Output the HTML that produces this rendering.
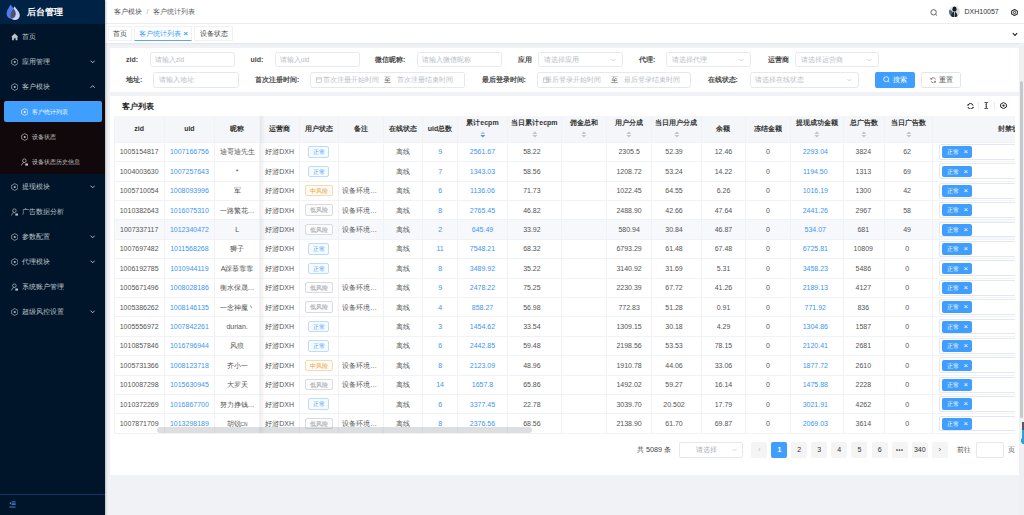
<!DOCTYPE html>
<html><head><meta charset="utf-8"><style>*{margin:0;padding:0;box-sizing:border-box;}
html,body{width:1024px;height:515px;overflow:hidden;background:#f0f2f5;font-family:"Liberation Sans",sans-serif;font-size:7px;color:#606266;}
.abs{position:absolute;}
#side{position:absolute;left:0;top:0;width:105px;height:515px;background:#001529;box-shadow:1px 0 2px rgba(0,21,41,0.25);z-index:5;}
#logo{position:absolute;left:0;top:0;width:105px;height:23.5px;background:#002244;}
#logo .t{position:absolute;left:27px;top:5px;font-size:9.3px;font-weight:bold;color:#fff;line-height:14px;}
.mi{position:absolute;left:0;width:105px;height:25px;color:#bcc2ca;font-size:7px;line-height:23.8px;font-weight:500;}
.mi .ic{position:absolute;left:10.8px;top:8.3px;width:7.5px;height:8px;}
.mi .tx{position:absolute;left:22px;top:0;}
.mi .ch{position:absolute;left:89.8px;top:9.5px;width:5.4px;height:5.4px;color:#d0d4da;}
#sub{position:absolute;left:0;top:99.5px;width:105px;height:74.5px;background:#10080a;}
.si{position:absolute;left:0;width:105px;height:25px;color:#c5c5c5;font-size:6px;line-height:24px;}
.si .ic{position:absolute;left:20.8px;top:8.3px;width:7.5px;height:8px;}
.si .tx{position:absolute;left:32px;top:0;}
#header{position:absolute;left:105px;top:0;width:919px;height:23.5px;background:#fff;border-bottom:1px solid #eceef1;}
#tabs{position:absolute;left:105px;top:23.5px;width:919px;height:19px;background:#fff;box-shadow:0 1px 2px rgba(0,0,0,0.06);}
.tab{position:absolute;top:2.7px;height:14.8px;border:1px solid #f0f1f4;background:#fff;color:#444;font-size:7px;line-height:13px;text-align:center;font-weight:500;}
.card{position:absolute;background:#fff;}
.lbl{position:absolute;font-weight:bold;color:#4a4a4a;font-size:7px;line-height:16px;}
.inp{position:absolute;height:15.7px;border:1px solid #e6e8ec;border-radius:2.5px;background:#fff;color:#b8bcc4;font-size:6.5px;line-height:13.5px;padding-left:4.3px;}
.inp span{top:0;}
.hd{position:absolute;text-align:center;font-weight:bold;color:#333;font-size:7px;line-height:10px;white-space:nowrap;}
.td{position:absolute;text-align:center;color:#555;font-size:7px;line-height:12px;white-space:nowrap;overflow:hidden;}
.tg{position:absolute;height:11.5px;border:0.7px solid;border-radius:2px;font-size:5.8px;line-height:10.1px;text-align:center;white-space:nowrap;}
.tg-b{border-color:#bcdcfd;background:#f7fbff;color:#409eff;}
.tg-o{border-color:#f5dbb5;background:#fffbf5;color:#e6a23c;}
.tg-g{border-color:#d9dbe0;background:#fcfcfc;color:#8e9196;}
.pb{position:absolute;top:442.2px;width:16px;height:15.7px;background:#f4f4f5;border-radius:2px;color:#303133;text-align:center;line-height:15.7px;font-size:7px;}
</style></head>
<body>
<div id="side"><div id="logo">
<svg class="abs" style="left:6px;top:4px" width="15" height="17" viewBox="0 0 15 17"><defs><clipPath id="cl"><path d="M4.6 0.5 C3.4 3 0.6 6.2 0.6 9.6 C0.6 12.6 2.6 14.8 5.2 14.8 C7.8 14.8 9.8 12.6 9.8 9.6 C9.8 6.2 6 3 4.6 0.5Z"/></clipPath></defs><path d="M4.6 0.5 C3.4 3 0.6 6.2 0.6 9.6 C0.6 12.6 2.6 14.8 5.2 14.8 C7.8 14.8 9.8 12.6 9.8 9.6 C9.8 6.2 6 3 4.6 0.5Z" fill="#4a7cf3"/><path d="M8.6 2.2 C7.4 4.8 4.2 7.8 4.2 11.2 C4.2 14 6.2 16 8.9 16 C11.6 16 13.8 14 13.8 11.2 C13.8 7.8 10 4.8 8.6 2.2Z" fill="#c8cff5"/><path d="M8.6 2.2 C7.4 4.8 4.2 7.8 4.2 11.2 C4.2 14 6.2 16 8.9 16 C11.6 16 13.8 14 13.8 11.2 C13.8 7.8 10 4.8 8.6 2.2Z" fill="#4c5072" clip-path="url(#cl)"/></svg><div class="t">后台管理</div></div><div class="mi" style="top:24.5px"><svg class="ic" viewBox="0 0 8 8"><path d="M4 0.3 L7.8 3.8 L6.9 3.8 L6.9 7.5 L4.9 7.5 L4.9 5.3 L3.1 5.3 L3.1 7.5 L1.1 7.5 L1.1 3.8 L0.2 3.8 Z" fill="currentColor"/></svg><span class="tx">首页</span></div><div class="mi" style="top:49.5px"><svg class="ic" viewBox="0 0 8 8"><path d="M4 0.4 L7.3 2.2 L7.3 5.8 L4 7.6 L0.7 5.8 L0.7 2.2 Z" fill="none" stroke="currentColor" stroke-width="0.7"/><circle cx="4" cy="4" r="1.1" fill="currentColor"/></svg><span class="tx">应用管理</span><svg class="ch" viewBox="0 0 6 6"><path d="M0.6 1.8 L3 4.2 L5.4 1.8" fill="none" stroke="currentColor" stroke-width="0.95"/></svg></div><div class="mi" style="top:74.5px"><svg class="ic" viewBox="0 0 8 8"><path d="M4 0.4 L7.3 2.2 L7.3 5.8 L4 7.6 L0.7 5.8 L0.7 2.2 Z" fill="none" stroke="currentColor" stroke-width="0.7"/><circle cx="4" cy="4" r="1.1" fill="currentColor"/></svg><span class="tx">客户模块</span><svg class="ch" viewBox="0 0 6 6"><path d="M0.6 4.2 L3 1.8 L5.4 4.2" fill="none" stroke="currentColor" stroke-width="0.95"/></svg></div><div class="mi" style="top:174.5px"><svg class="ic" viewBox="0 0 8 8"><path d="M4 0.4 L7.3 2.2 L7.3 5.8 L4 7.6 L0.7 5.8 L0.7 2.2 Z" fill="none" stroke="currentColor" stroke-width="0.7"/><circle cx="4" cy="4" r="1.1" fill="currentColor"/></svg><span class="tx">提现模块</span><svg class="ch" viewBox="0 0 6 6"><path d="M0.6 1.8 L3 4.2 L5.4 1.8" fill="none" stroke="currentColor" stroke-width="0.95"/></svg></div><div class="mi" style="top:199.5px"><svg class="ic" viewBox="0 0 8 8"><circle cx="3.6" cy="2.6" r="1.9" fill="none" stroke="currentColor" stroke-width="0.75"/><path d="M0.6 7.6 C1 5.6 2.2 4.6 3.6 4.6" fill="none" stroke="currentColor" stroke-width="0.75"/><rect x="4.6" y="5.6" width="3" height="2.2" fill="currentColor"/></svg><span class="tx">广告数据分析</span></div><div class="mi" style="top:224.5px"><svg class="ic" viewBox="0 0 8 8"><path d="M4 0.4 L7.3 2.2 L7.3 5.8 L4 7.6 L0.7 5.8 L0.7 2.2 Z" fill="none" stroke="currentColor" stroke-width="0.7"/><circle cx="4" cy="4" r="1.1" fill="currentColor"/></svg><span class="tx">参数配置</span><svg class="ch" viewBox="0 0 6 6"><path d="M0.6 1.8 L3 4.2 L5.4 1.8" fill="none" stroke="currentColor" stroke-width="0.95"/></svg></div><div class="mi" style="top:249.5px"><svg class="ic" viewBox="0 0 8 8"><path d="M4 0.4 L7.3 2.2 L7.3 5.8 L4 7.6 L0.7 5.8 L0.7 2.2 Z" fill="none" stroke="currentColor" stroke-width="0.7"/><circle cx="4" cy="4" r="1.1" fill="currentColor"/></svg><span class="tx">代理模块</span><svg class="ch" viewBox="0 0 6 6"><path d="M0.6 1.8 L3 4.2 L5.4 1.8" fill="none" stroke="currentColor" stroke-width="0.95"/></svg></div><div class="mi" style="top:274.5px"><svg class="ic" viewBox="0 0 8 8"><circle cx="3.6" cy="2.6" r="1.9" fill="none" stroke="currentColor" stroke-width="0.75"/><path d="M0.6 7.6 C1 5.6 2.2 4.6 3.6 4.6" fill="none" stroke="currentColor" stroke-width="0.75"/><rect x="4.6" y="5.6" width="3" height="2.2" fill="currentColor"/></svg><span class="tx">系统账户管理</span></div><div class="mi" style="top:299.5px"><svg class="ic" viewBox="0 0 8 8"><path d="M4 0.4 L7.3 2.2 L7.3 5.8 L4 7.6 L0.7 5.8 L0.7 2.2 Z" fill="none" stroke="currentColor" stroke-width="0.7"/><circle cx="4" cy="4" r="1.1" fill="currentColor"/></svg><span class="tx">超级风控设置</span><svg class="ch" viewBox="0 0 6 6"><path d="M0.6 1.8 L3 4.2 L5.4 1.8" fill="none" stroke="currentColor" stroke-width="0.95"/></svg></div><div id="sub"></div><div class="abs" style="left:4px;top:101.2px;width:97.5px;height:20.5px;background:#409eff;border-radius:2px"></div><div class="si" style="top:99.5px;color:#fff"><svg class="ic" viewBox="0 0 8 8"><path d="M4 0.4 L7.3 2.2 L7.3 5.8 L4 7.6 L0.7 5.8 L0.7 2.2 Z" fill="none" stroke="currentColor" stroke-width="0.7"/><circle cx="4" cy="4" r="1.1" fill="currentColor"/></svg><span class="tx">客户统计列表</span></div><div class="si" style="top:124.5px;color:#c8c8c8"><svg class="ic" viewBox="0 0 8 8"><path d="M4 0.4 L7.3 2.2 L7.3 5.8 L4 7.6 L0.7 5.8 L0.7 2.2 Z" fill="none" stroke="currentColor" stroke-width="0.7"/><circle cx="4" cy="4" r="1.1" fill="currentColor"/></svg><span class="tx">设备状态</span></div><div class="si" style="top:149.5px;color:#c8c8c8"><svg class="ic" viewBox="0 0 8 8"><circle cx="3.6" cy="2.6" r="1.9" fill="none" stroke="currentColor" stroke-width="0.75"/><path d="M0.6 7.6 C1 5.6 2.2 4.6 3.6 4.6" fill="none" stroke="currentColor" stroke-width="0.75"/><rect x="4.6" y="5.6" width="3" height="2.2" fill="currentColor"/></svg><span class="tx">设备状态历史信息</span></div><div class="abs" style="left:0;top:494px;width:105px;height:1px;background:#0b3866"></div><svg class="abs" style="left:8.5px;top:500.5px" width="7" height="7" viewBox="0 0 7 7"><path d="M0.3 2.2 L2 1 L2 3.4Z" fill="#3f8ee8"/><rect x="2.6" y="0.4" width="4" height="0.8" fill="#3f8ee8"/><rect x="2.6" y="1.8" width="4" height="0.8" fill="#3f8ee8"/><rect x="2.6" y="3.2" width="4" height="0.8" fill="#3f8ee8"/><rect x="0.3" y="5.6" width="6.3" height="0.9" fill="#3f8ee8"/></svg></div>
<div id="header">
<div class="abs" style="left:8.6px;top:0.4px;line-height:23.5px;color:#505359;font-size:6.9px;font-weight:500">客户模块<span style="color:#a9acb2;margin:0 4.6px 0 5px">/</span><span style="color:#606266">客户统计列表</span></div>
<svg class="abs" style="left:824.5px;top:8.5px" width="8" height="7" viewBox="0 0 8 7"><circle cx="3.6" cy="3.3" r="2.7" fill="none" stroke="#555" stroke-width="0.9"/><path d="M5.6 5.3 L7 6.6" stroke="#555" stroke-width="0.9"/></svg>
<svg class="abs" style="left:843.9px;top:6.1px" width="10.8" height="11.2" viewBox="0 0 10.8 11.2"><defs><clipPath id="av"><ellipse cx="5.4" cy="5.6" rx="5.4" ry="5.6"/></clipPath></defs><g clip-path="url(#av)"><rect width="11" height="12" fill="#dadde0"/><path d="M0 3.5 L0 12 L7 12 L3 5Z" fill="#3a6c8e"/><path d="M2 12 C2 8 3 6.2 5.3 5.8 C7.6 6.2 8.4 8 8.8 12Z" fill="#20272d"/><ellipse cx="5.5" cy="3.2" rx="2.1" ry="2.6" fill="#1a1a1a"/><path d="M5.1 5.6 L6.1 5.6 L5.8 11 L5.2 11Z" fill="#c8c8c8"/></g></svg>
<div class="abs" style="left:859.5px;top:0;line-height:23.5px;color:#333;font-size:7px">DXH10057</div>
<svg class="abs" style="left:905.5px;top:8.6px" width="7" height="7" viewBox="0 0 8 8"><path d="M4 0.5 L7.3 2.3 L7.3 5.7 L4 7.5 L0.7 5.7 L0.7 2.3 Z" fill="none" stroke="#333" stroke-width="1.2"/><circle cx="4" cy="4" r="1.3" fill="none" stroke="#333" stroke-width="1.1"/></svg>
</div>
<div id="tabs">
<div class="tab" style="left:2.7px;width:24.7px">首页</div>
<div class="tab" style="left:29px;width:58px;color:#409eff;border-bottom:1.6px solid #5aa6f5;line-height:12.5px"><span style="position:absolute;left:4.2px;top:0.5px">客户统计列表</span><span style="position:absolute;left:48.3px;top:1.8px;font-size:8px;line-height:10px;font-weight:bold">×</span></div>
<div class="tab" style="left:89px;width:39px">设备状态</div>
<svg class="abs" style="left:907px;top:8px" width="6" height="5" viewBox="0 0 6 5"><path d="M0.8 1.2 L3 3.4 L5.2 1.2" fill="none" stroke="#222" stroke-width="1.1"/></svg>
</div>
<div class="card" style="left:110px;top:47.5px;width:909px;height:44.5px"></div><div class="lbl" style="left:126px;top:51.5px">zid:</div><div class="inp" style="left:149.5px;top:51.7px;width:85px">请输入zid</div><div class="lbl" style="left:250.5px;top:51.5px">uid:</div><div class="inp" style="left:274.5px;top:51.7px;width:85px">请输入uid</div><div class="lbl" style="left:375px;top:51.5px">微信昵称:</div><div class="inp" style="left:416.5px;top:51.7px;width:85px">请输入微信昵称</div><div class="lbl" style="left:518px;top:51.5px">应用</div><div class="inp" style="left:538.4px;top:51.7px;width:84.2px">请选择应用<svg class="abs" style="right:6px;top:5px" width="5" height="4" viewBox="0 0 5 4"><path d="M0.5 1 L2.5 3 L4.5 1" fill="none" stroke="#b4b8bf" stroke-width="0.6"/></svg></div><div class="lbl" style="left:639px;top:51.5px">代理:</div><div class="inp" style="left:666.4px;top:51.7px;width:84.8px">请选择代理<svg class="abs" style="right:6px;top:5px" width="5" height="4" viewBox="0 0 5 4"><path d="M0.5 1 L2.5 3 L4.5 1" fill="none" stroke="#b4b8bf" stroke-width="0.6"/></svg></div><div class="lbl" style="left:767.5px;top:51.5px">运营商</div><div class="inp" style="left:795.4px;top:51.7px;width:84.1px">请选择运营商<svg class="abs" style="right:6px;top:5px" width="5" height="4" viewBox="0 0 5 4"><path d="M0.5 1 L2.5 3 L4.5 1" fill="none" stroke="#b4b8bf" stroke-width="0.6"/></svg></div><div class="lbl" style="left:126px;top:71.8px">地址:</div><div class="inp" style="left:153.4px;top:72.2px;width:85.2px">请输入地址:</div><div class="lbl" style="left:255px;top:71.8px">首次注册时间:</div><div class="inp" style="left:310.3px;top:72.2px;width:155px;padding-left:0"><svg class="abs" style="left:4.5px;top:3.6px" width="6" height="6" viewBox="0 0 6 6"><rect x="0.4" y="0.8" width="5.2" height="4.8" fill="none" stroke="#b4b8bf" stroke-width="0.6"/><path d="M0.4 2 L5.6 2" stroke="#b4b8bf" stroke-width="0.6"/></svg><span class="abs" style="left:12px">首次注册开始时间</span><span class="abs" style="left:73px;color:#555">至</span><span class="abs" style="left:86px">首次注册结束时间</span></div><div class="lbl" style="left:481.5px;top:71.8px">最后登录时间:</div><div class="inp" style="left:537.3px;top:72.2px;width:154.2px;padding-left:0"><svg class="abs" style="left:4.5px;top:3.6px" width="6" height="6" viewBox="0 0 6 6"><rect x="0.4" y="0.8" width="5.2" height="4.8" fill="none" stroke="#b4b8bf" stroke-width="0.6"/><path d="M0.4 2 L5.6 2" stroke="#b4b8bf" stroke-width="0.6"/></svg><span class="abs" style="left:7px">最后登录开始时间</span><span class="abs" style="left:72.5px;color:#555">至</span><span class="abs" style="left:85.5px">最后登录结束时间</span></div><div class="lbl" style="left:707.6px;top:71.8px">在线状态:</div><div class="inp" style="left:749.7px;top:72.2px;width:109.2px">请选择在线状态<svg class="abs" style="right:6px;top:5px" width="5" height="4" viewBox="0 0 5 4"><path d="M0.5 1 L2.5 3 L4.5 1" fill="none" stroke="#b4b8bf" stroke-width="0.6"/></svg></div><div class="abs" style="left:875.4px;top:71.7px;width:39.4px;height:16px;background:#409eff;border-radius:2px;color:#fff;line-height:16px;font-size:7px"><svg class="abs" style="left:7.6px;top:4.6px" width="7" height="7" viewBox="0 0 7 7"><circle cx="3.2" cy="3.2" r="2.5" fill="none" stroke="#fff" stroke-width="0.75"/><path d="M5 5 L6.3 6.3" stroke="#fff" stroke-width="0.75"/></svg><span class="abs" style="left:18px">搜索</span></div><div class="abs" style="left:921.4px;top:71.7px;width:39.3px;height:16px;background:#fff;border:1px solid #e2e5ea;border-radius:2px;color:#555;line-height:14px;font-size:7px"><svg class="abs" style="left:7.6px;top:4.2px" width="6.5" height="6.5" viewBox="0 0 7 7"><path d="M5.9 2.6 A2.6 2.6 0 0 0 1.0 2.3" fill="none" stroke="#555" stroke-width="0.7"/><path d="M1.1 4.4 A2.6 2.6 0 0 0 6 4.7" fill="none" stroke="#555" stroke-width="0.7"/><path d="M0.7 0.9 L1.0 2.5 L2.6 2.2" fill="none" stroke="#555" stroke-width="0.7"/><path d="M6.3 6.1 L6 4.5 L4.4 4.8" fill="none" stroke="#555" stroke-width="0.7"/></svg><span class="abs" style="left:17px">重置</span></div>
<div class="card" style="left:110px;top:95.5px;width:909px;height:379.2px"></div><div class="abs" style="left:122.4px;top:100.7px;font-size:7.9px;font-weight:bold;color:#222;line-height:12px">客户列表</div><svg class="abs" style="left:966.5px;top:102.5px" width="7" height="6.6" viewBox="0 0 7 6.6"><path d="M1.0 2.2 A2.6 2.6 0 0 1 6.0 2.6" fill="none" stroke="#222" stroke-width="1"/><path d="M6.0 4.4 A2.6 2.6 0 0 1 1.0 4.0" fill="none" stroke="#222" stroke-width="1"/><circle cx="1.0" cy="2.0" r="0.75" fill="#222"/><circle cx="6.0" cy="4.6" r="0.75" fill="#222"/></svg><div class="abs" style="left:977.8px;top:102px;width:0.7px;height:7.5px;background:#e8eaee"></div><svg class="abs" style="left:984px;top:102.3px" width="4.5" height="7" viewBox="0 0 4.5 7"><path d="M0.4 0.5 L4.1 0.5 M0.4 6.5 L4.1 6.5" stroke="#333" stroke-width="0.8"/><path d="M2.25 1.2 L2.25 5.8" stroke="#333" stroke-width="0.9"/><path d="M1.2 2.4 L2.25 1.3 L3.3 2.4Z M1.2 4.6 L2.25 5.7 L3.3 4.6Z" fill="#333"/></svg><div class="abs" style="left:994.2px;top:102px;width:0.7px;height:7.5px;background:#e8eaee"></div><svg class="abs" style="left:999.6px;top:102.2px" width="7" height="7.2" viewBox="0 0 7 7.2"><path d="M3.5 0.55 L6.35 2.15 L6.35 5.05 L3.5 6.65 L0.65 5.05 L0.65 2.15 Z" fill="none" stroke="#222" stroke-width="1"/><circle cx="3.5" cy="3.6" r="1.15" fill="#222"/></svg><div class="abs" style="left:114px;top:116.2px;width:901px;height:318px;overflow:hidden"><div class="abs" style="left:0;top:0;width:930px;height:26.10000000000001px;background:#f4f6f9"></div><div class="abs" style="left:0;top:104.2px;width:930px;height:18.9px;background:#f6f8fb"></div><div class="abs" style="left:0;top:25.60000000000001px;width:930px;height:0.7px;background:#f0f2f5"></div><div class="abs" style="left:0;top:45.000000000000014px;width:930px;height:0.7px;background:#f0f2f5"></div><div class="abs" style="left:0;top:64.40000000000002px;width:930px;height:0.7px;background:#f0f2f5"></div><div class="abs" style="left:0;top:83.8px;width:930px;height:0.7px;background:#f0f2f5"></div><div class="abs" style="left:0;top:103.2px;width:930px;height:0.7px;background:#f0f2f5"></div><div class="abs" style="left:0;top:122.60000000000001px;width:930px;height:0.7px;background:#f0f2f5"></div><div class="abs" style="left:0;top:142.0px;width:930px;height:0.7px;background:#f0f2f5"></div><div class="abs" style="left:0;top:161.40000000000003px;width:930px;height:0.7px;background:#f0f2f5"></div><div class="abs" style="left:0;top:180.8px;width:930px;height:0.7px;background:#f0f2f5"></div><div class="abs" style="left:0;top:200.2px;width:930px;height:0.7px;background:#f0f2f5"></div><div class="abs" style="left:0;top:219.60000000000002px;width:930px;height:0.7px;background:#f0f2f5"></div><div class="abs" style="left:0;top:239.0px;width:930px;height:0.7px;background:#f0f2f5"></div><div class="abs" style="left:0;top:258.40000000000003px;width:930px;height:0.7px;background:#f0f2f5"></div><div class="abs" style="left:0;top:277.8px;width:930px;height:0.7px;background:#f0f2f5"></div><div class="abs" style="left:0;top:297.2px;width:930px;height:0.7px;background:#f0f2f5"></div><div class="abs" style="left:0;top:316.6px;width:930px;height:0.7px;background:#f0f2f5"></div><div class="abs" style="left:49.900000000000006px;top:0;width:0.7px;height:317.1px;background:#f0f2f5"></div><div class="abs" style="left:99.9px;top:0;width:0.7px;height:317.1px;background:#f0f2f5"></div><div class="abs" style="left:145.3px;top:0;width:0.7px;height:317.1px;background:#f0f2f5"></div><div class="abs" style="left:185.0px;top:0;width:0.7px;height:317.1px;background:#f0f2f5"></div><div class="abs" style="left:223.8px;top:0;width:0.7px;height:317.1px;background:#f0f2f5"></div><div class="abs" style="left:269.0px;top:0;width:0.7px;height:317.1px;background:#f0f2f5"></div><div class="abs" style="left:308.0px;top:0;width:0.7px;height:317.1px;background:#f0f2f5"></div><div class="abs" style="left:343.2px;top:0;width:0.7px;height:317.1px;background:#f0f2f5"></div><div class="abs" style="left:392.8px;top:0;width:0.7px;height:317.1px;background:#f0f2f5"></div><div class="abs" style="left:447.0px;top:0;width:0.7px;height:317.1px;background:#f0f2f5"></div><div class="abs" style="left:492.29999999999995px;top:0;width:0.7px;height:317.1px;background:#f0f2f5"></div><div class="abs" style="left:536.9px;top:0;width:0.7px;height:317.1px;background:#f0f2f5"></div><div class="abs" style="left:586.9px;top:0;width:0.7px;height:317.1px;background:#f0f2f5"></div><div class="abs" style="left:631.1px;top:0;width:0.7px;height:317.1px;background:#f0f2f5"></div><div class="abs" style="left:675.9px;top:0;width:0.7px;height:317.1px;background:#f0f2f5"></div><div class="abs" style="left:728.6px;top:0;width:0.7px;height:317.1px;background:#f0f2f5"></div><div class="abs" style="left:770.0px;top:0;width:0.7px;height:317.1px;background:#f0f2f5"></div><div class="abs" style="left:817.8px;top:0;width:0.7px;height:317.1px;background:#f0f2f5"></div><div class="abs" style="left:0;top:0;width:0.7px;height:317.1px;background:#f0f2f5"></div><div class="hd" style="left:0px;width:50.400000000000006px;top:7.999999999999986px">zid</div><div class="hd" style="left:50.400000000000006px;width:50.0px;top:7.999999999999986px">uid</div><div class="hd" style="left:100.4px;width:45.400000000000006px;top:7.999999999999986px">昵称</div><div class="hd" style="left:145.8px;width:39.69999999999999px;top:7.999999999999986px">运营商</div><div class="hd" style="left:185.5px;width:38.80000000000001px;top:7.999999999999986px">用户状态</div><div class="hd" style="left:224.3px;width:45.19999999999999px;top:7.999999999999986px">备注</div><div class="hd" style="left:269.5px;width:39.0px;top:7.999999999999986px">在线状态</div><div class="hd" style="left:308.5px;width:35.19999999999999px;top:7.999999999999986px">uid总数</div><div class="hd" style="left:343.7px;width:49.60000000000002px;top:2.299999999999997px">累计ecpm</div><svg class="abs" style="left:365.7px;top:14.799999999999997px" width="5.6" height="7" viewBox="0 0 5.6 7"><path d="M0.3 2.9 L2.8 0.4 L5.3 2.9Z" fill="#c0c4cc"/><path d="M0.3 4.1 L2.8 6.6 L5.3 4.1Z" fill="#409eff"/></svg><div class="hd" style="left:393.3px;width:54.19999999999999px;top:2.299999999999997px">当日累计ecpm</div><svg class="abs" style="left:417.59999999999997px;top:14.799999999999997px" width="5.6" height="7" viewBox="0 0 5.6 7"><path d="M0.3 2.9 L2.8 0.4 L5.3 2.9Z" fill="#c0c4cc"/><path d="M0.3 4.1 L2.8 6.6 L5.3 4.1Z" fill="#c0c4cc"/></svg><div class="hd" style="left:447.5px;width:45.299999999999955px;top:2.299999999999997px">佣金总和</div><svg class="abs" style="left:467.34999999999997px;top:14.799999999999997px" width="5.6" height="7" viewBox="0 0 5.6 7"><path d="M0.3 2.9 L2.8 0.4 L5.3 2.9Z" fill="#c0c4cc"/><path d="M0.3 4.1 L2.8 6.6 L5.3 4.1Z" fill="#c0c4cc"/></svg><div class="hd" style="left:492.79999999999995px;width:44.60000000000002px;top:2.299999999999997px">用户分成</div><svg class="abs" style="left:512.3px;top:14.799999999999997px" width="5.6" height="7" viewBox="0 0 5.6 7"><path d="M0.3 2.9 L2.8 0.4 L5.3 2.9Z" fill="#c0c4cc"/><path d="M0.3 4.1 L2.8 6.6 L5.3 4.1Z" fill="#c0c4cc"/></svg><div class="hd" style="left:537.4px;width:50.0px;top:2.299999999999997px">当日用户分成</div><svg class="abs" style="left:559.6px;top:14.799999999999997px" width="5.6" height="7" viewBox="0 0 5.6 7"><path d="M0.3 2.9 L2.8 0.4 L5.3 2.9Z" fill="#c0c4cc"/><path d="M0.3 4.1 L2.8 6.6 L5.3 4.1Z" fill="#c0c4cc"/></svg><div class="hd" style="left:587.4px;width:44.200000000000045px;top:7.999999999999986px">余额</div><div class="hd" style="left:631.6px;width:44.799999999999955px;top:7.999999999999986px">冻结金额</div><div class="hd" style="left:676.4px;width:52.700000000000045px;top:2.299999999999997px">提现成功金额</div><svg class="abs" style="left:699.95px;top:14.799999999999997px" width="5.6" height="7" viewBox="0 0 5.6 7"><path d="M0.3 2.9 L2.8 0.4 L5.3 2.9Z" fill="#c0c4cc"/><path d="M0.3 4.1 L2.8 6.6 L5.3 4.1Z" fill="#c0c4cc"/></svg><div class="hd" style="left:729.1px;width:41.39999999999998px;top:2.299999999999997px">总广告数</div><svg class="abs" style="left:747.0px;top:14.799999999999997px" width="5.6" height="7" viewBox="0 0 5.6 7"><path d="M0.3 2.9 L2.8 0.4 L5.3 2.9Z" fill="#c0c4cc"/><path d="M0.3 4.1 L2.8 6.6 L5.3 4.1Z" fill="#c0c4cc"/></svg><div class="hd" style="left:770.5px;width:47.799999999999955px;top:2.299999999999997px">当日广告数</div><svg class="abs" style="left:791.6px;top:14.799999999999997px" width="5.6" height="7" viewBox="0 0 5.6 7"><path d="M0.3 2.9 L2.8 0.4 L5.3 2.9Z" fill="#c0c4cc"/><path d="M0.3 4.1 L2.8 6.6 L5.3 4.1Z" fill="#c0c4cc"/></svg><div class="hd" style="left:818.3px;width:159.70000000000005px;top:7.999999999999986px">封禁状态</div><div class="td" style="left:0px;width:50.400000000000006px;top:30.199999999999996px;">1005154817</div><div class="td" style="left:50.400000000000006px;width:50.0px;top:30.199999999999996px;color:#3d95f2;">1007166756</div><div class="td" style="left:100.4px;width:45.400000000000006px;top:30.199999999999996px;">迪哥迪先生</div><div class="td" style="left:145.8px;width:39.69999999999999px;top:30.199999999999996px;">好游DXH</div><div class="tg tg-b" style="left:194.3px;top:29.999999999999996px;width:21.2px">正常</div><div class="td" style="left:269.5px;width:39.0px;top:30.199999999999996px;">离线</div><div class="td" style="left:308.5px;width:35.19999999999999px;top:30.199999999999996px;color:#3d95f2;">9</div><div class="td" style="left:343.7px;width:49.60000000000002px;top:30.199999999999996px;color:#3d95f2;">2561.67</div><div class="td" style="left:390.8px;width:54.19999999999999px;top:30.199999999999996px;">58.22</div><div class="td" style="left:492.79999999999995px;width:44.60000000000002px;top:30.199999999999996px;">2305.5</div><div class="td" style="left:535.0px;width:50.0px;top:30.199999999999996px;">52.39</div><div class="td" style="left:587.4px;width:44.200000000000045px;top:30.199999999999996px;">12.46</div><div class="td" style="left:631.6px;width:44.799999999999955px;top:30.199999999999996px;">0</div><div class="td" style="left:674.9499999999999px;width:52.700000000000045px;top:30.199999999999996px;color:#3d95f2;">2293.04</div><div class="td" style="left:728.6px;width:41.39999999999998px;top:30.199999999999996px;">3824</div><div class="td" style="left:769.2px;width:47.799999999999955px;top:30.199999999999996px;">62</div><div class="abs" style="left:825px;top:27.9px;width:90px;height:15.7px;border:1px solid #e4e7ed;border-radius:2px;background:#fff"></div><div class="abs" style="left:828.3px;top:29.999999999999996px;width:29.7px;height:11.9px;background:#409eff;border-radius:2px;color:#fff;font-size:6px;line-height:12.6px;padding-left:4.6px">正常<span style="position:absolute;left:21.2px;top:0;font-size:7.8px;line-height:12.2px">×</span></div><div class="td" style="left:0px;width:50.400000000000006px;top:49.6px;">1004003630</div><div class="td" style="left:50.400000000000006px;width:50.0px;top:49.6px;color:#3d95f2;">1007257643</div><div class="td" style="left:100.4px;width:45.400000000000006px;top:49.6px;">*</div><div class="td" style="left:145.8px;width:39.69999999999999px;top:49.6px;">好游DXH</div><div class="tg tg-b" style="left:194.3px;top:49.400000000000006px;width:21.2px">正常</div><div class="td" style="left:269.5px;width:39.0px;top:49.6px;">离线</div><div class="td" style="left:308.5px;width:35.19999999999999px;top:49.6px;color:#3d95f2;">7</div><div class="td" style="left:343.7px;width:49.60000000000002px;top:49.6px;color:#3d95f2;">1343.03</div><div class="td" style="left:390.8px;width:54.19999999999999px;top:49.6px;">58.56</div><div class="td" style="left:492.79999999999995px;width:44.60000000000002px;top:49.6px;">1208.72</div><div class="td" style="left:535.0px;width:50.0px;top:49.6px;">53.24</div><div class="td" style="left:587.4px;width:44.200000000000045px;top:49.6px;">14.22</div><div class="td" style="left:631.6px;width:44.799999999999955px;top:49.6px;">0</div><div class="td" style="left:674.9499999999999px;width:52.700000000000045px;top:49.6px;color:#3d95f2;">1194.50</div><div class="td" style="left:728.6px;width:41.39999999999998px;top:49.6px;">1313</div><div class="td" style="left:769.2px;width:47.799999999999955px;top:49.6px;">69</div><div class="abs" style="left:825px;top:47.300000000000004px;width:90px;height:15.7px;border:1px solid #e4e7ed;border-radius:2px;background:#fff"></div><div class="abs" style="left:828.3px;top:49.400000000000006px;width:29.7px;height:11.9px;background:#409eff;border-radius:2px;color:#fff;font-size:6px;line-height:12.6px;padding-left:4.6px">正常<span style="position:absolute;left:21.2px;top:0;font-size:7.8px;line-height:12.2px">×</span></div><div class="td" style="left:0px;width:50.400000000000006px;top:69.00000000000001px;">1005710054</div><div class="td" style="left:50.400000000000006px;width:50.0px;top:69.00000000000001px;color:#3d95f2;">1008093996</div><div class="td" style="left:100.4px;width:45.400000000000006px;top:69.00000000000001px;">军</div><div class="td" style="left:145.8px;width:39.69999999999999px;top:69.00000000000001px;">好游DXH</div><div class="tg tg-o" style="left:191.15px;top:68.80000000000001px;width:27.5px">中风险</div><div class="td" style="left:227.9px;width:41.59999999999999px;top:69.00000000000001px;text-align:left">设备环境…</div><div class="td" style="left:269.5px;width:39.0px;top:69.00000000000001px;">离线</div><div class="td" style="left:308.5px;width:35.19999999999999px;top:69.00000000000001px;color:#3d95f2;">6</div><div class="td" style="left:343.7px;width:49.60000000000002px;top:69.00000000000001px;color:#3d95f2;">1136.06</div><div class="td" style="left:390.8px;width:54.19999999999999px;top:69.00000000000001px;">71.73</div><div class="td" style="left:492.79999999999995px;width:44.60000000000002px;top:69.00000000000001px;">1022.45</div><div class="td" style="left:535.0px;width:50.0px;top:69.00000000000001px;">64.55</div><div class="td" style="left:587.4px;width:44.200000000000045px;top:69.00000000000001px;">6.26</div><div class="td" style="left:631.6px;width:44.799999999999955px;top:69.00000000000001px;">0</div><div class="td" style="left:674.9499999999999px;width:52.700000000000045px;top:69.00000000000001px;color:#3d95f2;">1016.19</div><div class="td" style="left:728.6px;width:41.39999999999998px;top:69.00000000000001px;">1300</div><div class="td" style="left:769.2px;width:47.799999999999955px;top:69.00000000000001px;">42</div><div class="abs" style="left:825px;top:66.7px;width:90px;height:15.7px;border:1px solid #e4e7ed;border-radius:2px;background:#fff"></div><div class="abs" style="left:828.3px;top:68.80000000000001px;width:29.7px;height:11.9px;background:#409eff;border-radius:2px;color:#fff;font-size:6px;line-height:12.6px;padding-left:4.6px">正常<span style="position:absolute;left:21.2px;top:0;font-size:7.8px;line-height:12.2px">×</span></div><div class="td" style="left:0px;width:50.400000000000006px;top:88.39999999999999px;">1010382643</div><div class="td" style="left:50.400000000000006px;width:50.0px;top:88.39999999999999px;color:#3d95f2;">1016075310</div><div class="td" style="left:100.4px;width:45.400000000000006px;top:88.39999999999999px;">一路繁花…</div><div class="td" style="left:145.8px;width:39.69999999999999px;top:88.39999999999999px;">好游DXH</div><div class="tg tg-g" style="left:191.15px;top:88.19999999999999px;width:27.5px">低风险</div><div class="td" style="left:227.9px;width:41.59999999999999px;top:88.39999999999999px;text-align:left">设备环境…</div><div class="td" style="left:269.5px;width:39.0px;top:88.39999999999999px;">离线</div><div class="td" style="left:308.5px;width:35.19999999999999px;top:88.39999999999999px;color:#3d95f2;">8</div><div class="td" style="left:343.7px;width:49.60000000000002px;top:88.39999999999999px;color:#3d95f2;">2765.45</div><div class="td" style="left:390.8px;width:54.19999999999999px;top:88.39999999999999px;">46.82</div><div class="td" style="left:492.79999999999995px;width:44.60000000000002px;top:88.39999999999999px;">2488.90</div><div class="td" style="left:535.0px;width:50.0px;top:88.39999999999999px;">42.66</div><div class="td" style="left:587.4px;width:44.200000000000045px;top:88.39999999999999px;">47.64</div><div class="td" style="left:631.6px;width:44.799999999999955px;top:88.39999999999999px;">0</div><div class="td" style="left:674.9499999999999px;width:52.700000000000045px;top:88.39999999999999px;color:#3d95f2;">2441.26</div><div class="td" style="left:728.6px;width:41.39999999999998px;top:88.39999999999999px;">2967</div><div class="td" style="left:769.2px;width:47.799999999999955px;top:88.39999999999999px;">58</div><div class="abs" style="left:825px;top:86.09999999999998px;width:90px;height:15.7px;border:1px solid #e4e7ed;border-radius:2px;background:#fff"></div><div class="abs" style="left:828.3px;top:88.19999999999999px;width:29.7px;height:11.9px;background:#409eff;border-radius:2px;color:#fff;font-size:6px;line-height:12.6px;padding-left:4.6px">正常<span style="position:absolute;left:21.2px;top:0;font-size:7.8px;line-height:12.2px">×</span></div><div class="td" style="left:0px;width:50.400000000000006px;top:107.8px;">1007337117</div><div class="td" style="left:50.400000000000006px;width:50.0px;top:107.8px;color:#3d95f2;">1012340472</div><div class="td" style="left:100.4px;width:45.400000000000006px;top:107.8px;">L</div><div class="td" style="left:145.8px;width:39.69999999999999px;top:107.8px;">好游DXH</div><div class="tg tg-g" style="left:191.15px;top:107.6px;width:27.5px">低风险</div><div class="td" style="left:227.9px;width:41.59999999999999px;top:107.8px;text-align:left">设备环境…</div><div class="td" style="left:269.5px;width:39.0px;top:107.8px;">离线</div><div class="td" style="left:308.5px;width:35.19999999999999px;top:107.8px;color:#3d95f2;">2</div><div class="td" style="left:343.7px;width:49.60000000000002px;top:107.8px;color:#3d95f2;">645.49</div><div class="td" style="left:390.8px;width:54.19999999999999px;top:107.8px;">33.92</div><div class="td" style="left:492.79999999999995px;width:44.60000000000002px;top:107.8px;">580.94</div><div class="td" style="left:535.0px;width:50.0px;top:107.8px;">30.84</div><div class="td" style="left:587.4px;width:44.200000000000045px;top:107.8px;">46.87</div><div class="td" style="left:631.6px;width:44.799999999999955px;top:107.8px;">0</div><div class="td" style="left:674.9499999999999px;width:52.700000000000045px;top:107.8px;color:#3d95f2;">534.07</div><div class="td" style="left:728.6px;width:41.39999999999998px;top:107.8px;">681</div><div class="td" style="left:769.2px;width:47.799999999999955px;top:107.8px;">49</div><div class="abs" style="left:825px;top:105.49999999999999px;width:90px;height:15.7px;border:1px solid #e4e7ed;border-radius:2px;background:#fff"></div><div class="abs" style="left:828.3px;top:107.6px;width:29.7px;height:11.9px;background:#409eff;border-radius:2px;color:#fff;font-size:6px;line-height:12.6px;padding-left:4.6px">正常<span style="position:absolute;left:21.2px;top:0;font-size:7.8px;line-height:12.2px">×</span></div><div class="td" style="left:0px;width:50.400000000000006px;top:127.20000000000002px;">1007697482</div><div class="td" style="left:50.400000000000006px;width:50.0px;top:127.20000000000002px;color:#3d95f2;">1011568268</div><div class="td" style="left:100.4px;width:45.400000000000006px;top:127.20000000000002px;">狮子</div><div class="td" style="left:145.8px;width:39.69999999999999px;top:127.20000000000002px;">好游DXH</div><div class="tg tg-b" style="left:194.3px;top:127.00000000000001px;width:21.2px">正常</div><div class="td" style="left:269.5px;width:39.0px;top:127.20000000000002px;">离线</div><div class="td" style="left:308.5px;width:35.19999999999999px;top:127.20000000000002px;color:#3d95f2;">11</div><div class="td" style="left:343.7px;width:49.60000000000002px;top:127.20000000000002px;color:#3d95f2;">7548.21</div><div class="td" style="left:390.8px;width:54.19999999999999px;top:127.20000000000002px;">68.32</div><div class="td" style="left:492.79999999999995px;width:44.60000000000002px;top:127.20000000000002px;">6793.29</div><div class="td" style="left:535.0px;width:50.0px;top:127.20000000000002px;">61.48</div><div class="td" style="left:587.4px;width:44.200000000000045px;top:127.20000000000002px;">67.48</div><div class="td" style="left:631.6px;width:44.799999999999955px;top:127.20000000000002px;">0</div><div class="td" style="left:674.9499999999999px;width:52.700000000000045px;top:127.20000000000002px;color:#3d95f2;">6725.81</div><div class="td" style="left:728.6px;width:41.39999999999998px;top:127.20000000000002px;">10809</div><div class="td" style="left:769.2px;width:47.799999999999955px;top:127.20000000000002px;">0</div><div class="abs" style="left:825px;top:124.9px;width:90px;height:15.7px;border:1px solid #e4e7ed;border-radius:2px;background:#fff"></div><div class="abs" style="left:828.3px;top:127.00000000000001px;width:29.7px;height:11.9px;background:#409eff;border-radius:2px;color:#fff;font-size:6px;line-height:12.6px;padding-left:4.6px">正常<span style="position:absolute;left:21.2px;top:0;font-size:7.8px;line-height:12.2px">×</span></div><div class="td" style="left:0px;width:50.400000000000006px;top:146.6px;">1006192785</div><div class="td" style="left:50.400000000000006px;width:50.0px;top:146.6px;color:#3d95f2;">1010944119</div><div class="td" style="left:100.4px;width:45.400000000000006px;top:146.6px;">A踩慕霏霏</div><div class="td" style="left:145.8px;width:39.69999999999999px;top:146.6px;">好游DXH</div><div class="tg tg-b" style="left:194.3px;top:146.39999999999998px;width:21.2px">正常</div><div class="td" style="left:269.5px;width:39.0px;top:146.6px;">离线</div><div class="td" style="left:308.5px;width:35.19999999999999px;top:146.6px;color:#3d95f2;">8</div><div class="td" style="left:343.7px;width:49.60000000000002px;top:146.6px;color:#3d95f2;">3489.92</div><div class="td" style="left:390.8px;width:54.19999999999999px;top:146.6px;">35.22</div><div class="td" style="left:492.79999999999995px;width:44.60000000000002px;top:146.6px;">3140.92</div><div class="td" style="left:535.0px;width:50.0px;top:146.6px;">31.69</div><div class="td" style="left:587.4px;width:44.200000000000045px;top:146.6px;">5.31</div><div class="td" style="left:631.6px;width:44.799999999999955px;top:146.6px;">0</div><div class="td" style="left:674.9499999999999px;width:52.700000000000045px;top:146.6px;color:#3d95f2;">3458.23</div><div class="td" style="left:728.6px;width:41.39999999999998px;top:146.6px;">5486</div><div class="td" style="left:769.2px;width:47.799999999999955px;top:146.6px;">0</div><div class="abs" style="left:825px;top:144.29999999999998px;width:90px;height:15.7px;border:1px solid #e4e7ed;border-radius:2px;background:#fff"></div><div class="abs" style="left:828.3px;top:146.39999999999998px;width:29.7px;height:11.9px;background:#409eff;border-radius:2px;color:#fff;font-size:6px;line-height:12.6px;padding-left:4.6px">正常<span style="position:absolute;left:21.2px;top:0;font-size:7.8px;line-height:12.2px">×</span></div><div class="td" style="left:0px;width:50.400000000000006px;top:166.00000000000003px;">1005671496</div><div class="td" style="left:50.400000000000006px;width:50.0px;top:166.00000000000003px;color:#3d95f2;">1008028186</div><div class="td" style="left:100.4px;width:45.400000000000006px;top:166.00000000000003px;">衡水保晟…</div><div class="td" style="left:145.8px;width:39.69999999999999px;top:166.00000000000003px;">好游DXH</div><div class="tg tg-g" style="left:191.15px;top:165.8px;width:27.5px">低风险</div><div class="td" style="left:227.9px;width:41.59999999999999px;top:166.00000000000003px;text-align:left">设备环境…</div><div class="td" style="left:269.5px;width:39.0px;top:166.00000000000003px;">离线</div><div class="td" style="left:308.5px;width:35.19999999999999px;top:166.00000000000003px;color:#3d95f2;">9</div><div class="td" style="left:343.7px;width:49.60000000000002px;top:166.00000000000003px;color:#3d95f2;">2478.22</div><div class="td" style="left:390.8px;width:54.19999999999999px;top:166.00000000000003px;">75.25</div><div class="td" style="left:492.79999999999995px;width:44.60000000000002px;top:166.00000000000003px;">2230.39</div><div class="td" style="left:535.0px;width:50.0px;top:166.00000000000003px;">67.72</div><div class="td" style="left:587.4px;width:44.200000000000045px;top:166.00000000000003px;">41.26</div><div class="td" style="left:631.6px;width:44.799999999999955px;top:166.00000000000003px;">0</div><div class="td" style="left:674.9499999999999px;width:52.700000000000045px;top:166.00000000000003px;color:#3d95f2;">2189.13</div><div class="td" style="left:728.6px;width:41.39999999999998px;top:166.00000000000003px;">4127</div><div class="td" style="left:769.2px;width:47.799999999999955px;top:166.00000000000003px;">0</div><div class="abs" style="left:825px;top:163.70000000000002px;width:90px;height:15.7px;border:1px solid #e4e7ed;border-radius:2px;background:#fff"></div><div class="abs" style="left:828.3px;top:165.8px;width:29.7px;height:11.9px;background:#409eff;border-radius:2px;color:#fff;font-size:6px;line-height:12.6px;padding-left:4.6px">正常<span style="position:absolute;left:21.2px;top:0;font-size:7.8px;line-height:12.2px">×</span></div><div class="td" style="left:0px;width:50.400000000000006px;top:185.4px;">1005386262</div><div class="td" style="left:50.400000000000006px;width:50.0px;top:185.4px;color:#3d95f2;">1008146135</div><div class="td" style="left:100.4px;width:45.400000000000006px;top:185.4px;">一念神魔丶</div><div class="td" style="left:145.8px;width:39.69999999999999px;top:185.4px;">好游DXH</div><div class="tg tg-g" style="left:191.15px;top:185.2px;width:27.5px">低风险</div><div class="td" style="left:227.9px;width:41.59999999999999px;top:185.4px;text-align:left">设备环境…</div><div class="td" style="left:269.5px;width:39.0px;top:185.4px;">离线</div><div class="td" style="left:308.5px;width:35.19999999999999px;top:185.4px;color:#3d95f2;">4</div><div class="td" style="left:343.7px;width:49.60000000000002px;top:185.4px;color:#3d95f2;">858.27</div><div class="td" style="left:390.8px;width:54.19999999999999px;top:185.4px;">56.98</div><div class="td" style="left:492.79999999999995px;width:44.60000000000002px;top:185.4px;">772.83</div><div class="td" style="left:535.0px;width:50.0px;top:185.4px;">51.28</div><div class="td" style="left:587.4px;width:44.200000000000045px;top:185.4px;">0.91</div><div class="td" style="left:631.6px;width:44.799999999999955px;top:185.4px;">0</div><div class="td" style="left:674.9499999999999px;width:52.700000000000045px;top:185.4px;color:#3d95f2;">771.92</div><div class="td" style="left:728.6px;width:41.39999999999998px;top:185.4px;">836</div><div class="td" style="left:769.2px;width:47.799999999999955px;top:185.4px;">0</div><div class="abs" style="left:825px;top:183.1px;width:90px;height:15.7px;border:1px solid #e4e7ed;border-radius:2px;background:#fff"></div><div class="abs" style="left:828.3px;top:185.2px;width:29.7px;height:11.9px;background:#409eff;border-radius:2px;color:#fff;font-size:6px;line-height:12.6px;padding-left:4.6px">正常<span style="position:absolute;left:21.2px;top:0;font-size:7.8px;line-height:12.2px">×</span></div><div class="td" style="left:0px;width:50.400000000000006px;top:204.79999999999998px;">1005556972</div><div class="td" style="left:50.400000000000006px;width:50.0px;top:204.79999999999998px;color:#3d95f2;">1007842261</div><div class="td" style="left:100.4px;width:45.400000000000006px;top:204.79999999999998px;">durian.</div><div class="td" style="left:145.8px;width:39.69999999999999px;top:204.79999999999998px;">好游DXH</div><div class="tg tg-b" style="left:194.3px;top:204.59999999999997px;width:21.2px">正常</div><div class="td" style="left:269.5px;width:39.0px;top:204.79999999999998px;">离线</div><div class="td" style="left:308.5px;width:35.19999999999999px;top:204.79999999999998px;color:#3d95f2;">3</div><div class="td" style="left:343.7px;width:49.60000000000002px;top:204.79999999999998px;color:#3d95f2;">1454.62</div><div class="td" style="left:390.8px;width:54.19999999999999px;top:204.79999999999998px;">33.54</div><div class="td" style="left:492.79999999999995px;width:44.60000000000002px;top:204.79999999999998px;">1309.15</div><div class="td" style="left:535.0px;width:50.0px;top:204.79999999999998px;">30.18</div><div class="td" style="left:587.4px;width:44.200000000000045px;top:204.79999999999998px;">4.29</div><div class="td" style="left:631.6px;width:44.799999999999955px;top:204.79999999999998px;">0</div><div class="td" style="left:674.9499999999999px;width:52.700000000000045px;top:204.79999999999998px;color:#3d95f2;">1304.86</div><div class="td" style="left:728.6px;width:41.39999999999998px;top:204.79999999999998px;">1587</div><div class="td" style="left:769.2px;width:47.799999999999955px;top:204.79999999999998px;">0</div><div class="abs" style="left:825px;top:202.49999999999997px;width:90px;height:15.7px;border:1px solid #e4e7ed;border-radius:2px;background:#fff"></div><div class="abs" style="left:828.3px;top:204.59999999999997px;width:29.7px;height:11.9px;background:#409eff;border-radius:2px;color:#fff;font-size:6px;line-height:12.6px;padding-left:4.6px">正常<span style="position:absolute;left:21.2px;top:0;font-size:7.8px;line-height:12.2px">×</span></div><div class="td" style="left:0px;width:50.400000000000006px;top:224.20000000000002px;">1010857846</div><div class="td" style="left:50.400000000000006px;width:50.0px;top:224.20000000000002px;color:#3d95f2;">1016796944</div><div class="td" style="left:100.4px;width:45.400000000000006px;top:224.20000000000002px;">风痕</div><div class="td" style="left:145.8px;width:39.69999999999999px;top:224.20000000000002px;">好游DXH</div><div class="tg tg-b" style="left:194.3px;top:224.0px;width:21.2px">正常</div><div class="td" style="left:269.5px;width:39.0px;top:224.20000000000002px;">离线</div><div class="td" style="left:308.5px;width:35.19999999999999px;top:224.20000000000002px;color:#3d95f2;">6</div><div class="td" style="left:343.7px;width:49.60000000000002px;top:224.20000000000002px;color:#3d95f2;">2442.85</div><div class="td" style="left:390.8px;width:54.19999999999999px;top:224.20000000000002px;">59.48</div><div class="td" style="left:492.79999999999995px;width:44.60000000000002px;top:224.20000000000002px;">2198.56</div><div class="td" style="left:535.0px;width:50.0px;top:224.20000000000002px;">53.53</div><div class="td" style="left:587.4px;width:44.200000000000045px;top:224.20000000000002px;">78.15</div><div class="td" style="left:631.6px;width:44.799999999999955px;top:224.20000000000002px;">0</div><div class="td" style="left:674.9499999999999px;width:52.700000000000045px;top:224.20000000000002px;color:#3d95f2;">2120.41</div><div class="td" style="left:728.6px;width:41.39999999999998px;top:224.20000000000002px;">2681</div><div class="td" style="left:769.2px;width:47.799999999999955px;top:224.20000000000002px;">0</div><div class="abs" style="left:825px;top:221.9px;width:90px;height:15.7px;border:1px solid #e4e7ed;border-radius:2px;background:#fff"></div><div class="abs" style="left:828.3px;top:224.0px;width:29.7px;height:11.9px;background:#409eff;border-radius:2px;color:#fff;font-size:6px;line-height:12.6px;padding-left:4.6px">正常<span style="position:absolute;left:21.2px;top:0;font-size:7.8px;line-height:12.2px">×</span></div><div class="td" style="left:0px;width:50.400000000000006px;top:243.6px;">1005731366</div><div class="td" style="left:50.400000000000006px;width:50.0px;top:243.6px;color:#3d95f2;">1008123718</div><div class="td" style="left:100.4px;width:45.400000000000006px;top:243.6px;">齐小一</div><div class="td" style="left:145.8px;width:39.69999999999999px;top:243.6px;">好游DXH</div><div class="tg tg-o" style="left:191.15px;top:243.39999999999998px;width:27.5px">中风险</div><div class="td" style="left:227.9px;width:41.59999999999999px;top:243.6px;text-align:left">设备环境…</div><div class="td" style="left:269.5px;width:39.0px;top:243.6px;">离线</div><div class="td" style="left:308.5px;width:35.19999999999999px;top:243.6px;color:#3d95f2;">8</div><div class="td" style="left:343.7px;width:49.60000000000002px;top:243.6px;color:#3d95f2;">2123.09</div><div class="td" style="left:390.8px;width:54.19999999999999px;top:243.6px;">48.96</div><div class="td" style="left:492.79999999999995px;width:44.60000000000002px;top:243.6px;">1910.78</div><div class="td" style="left:535.0px;width:50.0px;top:243.6px;">44.06</div><div class="td" style="left:587.4px;width:44.200000000000045px;top:243.6px;">33.06</div><div class="td" style="left:631.6px;width:44.799999999999955px;top:243.6px;">0</div><div class="td" style="left:674.9499999999999px;width:52.700000000000045px;top:243.6px;color:#3d95f2;">1877.72</div><div class="td" style="left:728.6px;width:41.39999999999998px;top:243.6px;">2610</div><div class="td" style="left:769.2px;width:47.799999999999955px;top:243.6px;">0</div><div class="abs" style="left:825px;top:241.29999999999998px;width:90px;height:15.7px;border:1px solid #e4e7ed;border-radius:2px;background:#fff"></div><div class="abs" style="left:828.3px;top:243.39999999999998px;width:29.7px;height:11.9px;background:#409eff;border-radius:2px;color:#fff;font-size:6px;line-height:12.6px;padding-left:4.6px">正常<span style="position:absolute;left:21.2px;top:0;font-size:7.8px;line-height:12.2px">×</span></div><div class="td" style="left:0px;width:50.400000000000006px;top:263.0px;">1010087298</div><div class="td" style="left:50.400000000000006px;width:50.0px;top:263.0px;color:#3d95f2;">1015630945</div><div class="td" style="left:100.4px;width:45.400000000000006px;top:263.0px;">大罗天</div><div class="td" style="left:145.8px;width:39.69999999999999px;top:263.0px;">好游DXH</div><div class="tg tg-g" style="left:191.15px;top:262.8px;width:27.5px">低风险</div><div class="td" style="left:227.9px;width:41.59999999999999px;top:263.0px;text-align:left">设备环境…</div><div class="td" style="left:269.5px;width:39.0px;top:263.0px;">离线</div><div class="td" style="left:308.5px;width:35.19999999999999px;top:263.0px;color:#3d95f2;">14</div><div class="td" style="left:343.7px;width:49.60000000000002px;top:263.0px;color:#3d95f2;">1657.8</div><div class="td" style="left:390.8px;width:54.19999999999999px;top:263.0px;">65.86</div><div class="td" style="left:492.79999999999995px;width:44.60000000000002px;top:263.0px;">1492.02</div><div class="td" style="left:535.0px;width:50.0px;top:263.0px;">59.27</div><div class="td" style="left:587.4px;width:44.200000000000045px;top:263.0px;">16.14</div><div class="td" style="left:631.6px;width:44.799999999999955px;top:263.0px;">0</div><div class="td" style="left:674.9499999999999px;width:52.700000000000045px;top:263.0px;color:#3d95f2;">1475.88</div><div class="td" style="left:728.6px;width:41.39999999999998px;top:263.0px;">2228</div><div class="td" style="left:769.2px;width:47.799999999999955px;top:263.0px;">0</div><div class="abs" style="left:825px;top:260.70000000000005px;width:90px;height:15.7px;border:1px solid #e4e7ed;border-radius:2px;background:#fff"></div><div class="abs" style="left:828.3px;top:262.8px;width:29.7px;height:11.9px;background:#409eff;border-radius:2px;color:#fff;font-size:6px;line-height:12.6px;padding-left:4.6px">正常<span style="position:absolute;left:21.2px;top:0;font-size:7.8px;line-height:12.2px">×</span></div><div class="td" style="left:0px;width:50.400000000000006px;top:282.4px;">1010372269</div><div class="td" style="left:50.400000000000006px;width:50.0px;top:282.4px;color:#3d95f2;">1016867700</div><div class="td" style="left:100.4px;width:45.400000000000006px;top:282.4px;">努力挣钱…</div><div class="td" style="left:145.8px;width:39.69999999999999px;top:282.4px;">好游DXH</div><div class="tg tg-b" style="left:194.3px;top:282.2px;width:21.2px">正常</div><div class="td" style="left:269.5px;width:39.0px;top:282.4px;">离线</div><div class="td" style="left:308.5px;width:35.19999999999999px;top:282.4px;color:#3d95f2;">6</div><div class="td" style="left:343.7px;width:49.60000000000002px;top:282.4px;color:#3d95f2;">3377.45</div><div class="td" style="left:390.8px;width:54.19999999999999px;top:282.4px;">22.78</div><div class="td" style="left:492.79999999999995px;width:44.60000000000002px;top:282.4px;">3039.70</div><div class="td" style="left:535.0px;width:50.0px;top:282.4px;">20.502</div><div class="td" style="left:587.4px;width:44.200000000000045px;top:282.4px;">17.79</div><div class="td" style="left:631.6px;width:44.799999999999955px;top:282.4px;">0</div><div class="td" style="left:674.9499999999999px;width:52.700000000000045px;top:282.4px;color:#3d95f2;">3021.91</div><div class="td" style="left:728.6px;width:41.39999999999998px;top:282.4px;">4262</div><div class="td" style="left:769.2px;width:47.799999999999955px;top:282.4px;">0</div><div class="abs" style="left:825px;top:280.1px;width:90px;height:15.7px;border:1px solid #e4e7ed;border-radius:2px;background:#fff"></div><div class="abs" style="left:828.3px;top:282.2px;width:29.7px;height:11.9px;background:#409eff;border-radius:2px;color:#fff;font-size:6px;line-height:12.6px;padding-left:4.6px">正常<span style="position:absolute;left:21.2px;top:0;font-size:7.8px;line-height:12.2px">×</span></div><div class="td" style="left:0px;width:50.400000000000006px;top:301.79999999999995px;">1007871709</div><div class="td" style="left:50.400000000000006px;width:50.0px;top:301.79999999999995px;color:#3d95f2;">1013298189</div><div class="td" style="left:100.4px;width:45.400000000000006px;top:301.79999999999995px;">胡锐<span style='font-size:4.8px'>CN</span></div><div class="td" style="left:145.8px;width:39.69999999999999px;top:301.79999999999995px;">好游DXH</div><div class="tg tg-g" style="left:191.15px;top:301.59999999999997px;width:27.5px">低风险</div><div class="td" style="left:227.9px;width:41.59999999999999px;top:301.79999999999995px;text-align:left">设备环境…</div><div class="td" style="left:269.5px;width:39.0px;top:301.79999999999995px;">离线</div><div class="td" style="left:308.5px;width:35.19999999999999px;top:301.79999999999995px;color:#3d95f2;">8</div><div class="td" style="left:343.7px;width:49.60000000000002px;top:301.79999999999995px;color:#3d95f2;">2376.56</div><div class="td" style="left:390.8px;width:54.19999999999999px;top:301.79999999999995px;">68.56</div><div class="td" style="left:492.79999999999995px;width:44.60000000000002px;top:301.79999999999995px;">2138.90</div><div class="td" style="left:535.0px;width:50.0px;top:301.79999999999995px;">61.70</div><div class="td" style="left:587.4px;width:44.200000000000045px;top:301.79999999999995px;">69.87</div><div class="td" style="left:631.6px;width:44.799999999999955px;top:301.79999999999995px;">0</div><div class="td" style="left:674.9499999999999px;width:52.700000000000045px;top:301.79999999999995px;color:#3d95f2;">2069.03</div><div class="td" style="left:728.6px;width:41.39999999999998px;top:301.79999999999995px;">3614</div><div class="td" style="left:769.2px;width:47.799999999999955px;top:301.79999999999995px;">0</div><div class="abs" style="left:825px;top:299.5px;width:90px;height:15.7px;border:1px solid #e4e7ed;border-radius:2px;background:#fff"></div><div class="abs" style="left:828.3px;top:301.59999999999997px;width:29.7px;height:11.9px;background:#409eff;border-radius:2px;color:#fff;font-size:6px;line-height:12.6px;padding-left:4.6px">正常<span style="position:absolute;left:21.2px;top:0;font-size:7.8px;line-height:12.2px">×</span></div><div class="abs" style="left:145.8px;top:0;width:5px;height:317.1px;background:linear-gradient(to right,rgba(0,0,0,0.07),rgba(0,0,0,0))"></div><div class="abs" style="left:43px;top:311.1px;width:375px;height:5.7px;border-radius:3px;background:rgba(144,147,153,0.3)"></div></div>
<div class="abs" style="left:637px;top:444px;line-height:12px;color:#444;font-size:7.2px">共 5089 条</div><div class="abs" style="left:679.2px;top:442.4px;width:63.5px;height:15.5px;border:1px solid #e4e7ed;border-radius:2px;color:#a9adb4;line-height:13.5px;text-align:center;padding-right:8px;font-size:6.5px">请选择<svg class="abs" style="left:52px;top:5px" width="5" height="4" viewBox="0 0 5 4"><path d="M0.5 1 L2.5 3 L4.5 1" fill="none" stroke="#b4b8bf" stroke-width="0.6"/></svg></div><div class="pb" style="left:751.3px;color:#c0c4cc;font-size:8px">‹</div><div class="pb" style="left:771.4px;background:#409eff;color:#fff;font-weight:bold">1</div><div class="pb" style="left:791.3px">2</div><div class="pb" style="left:811.2px">3</div><div class="pb" style="left:831.3px">4</div><div class="pb" style="left:851.4px">5</div><div class="pb" style="left:871.6px">6</div><div class="pb" style="left:891.5px"><svg class="abs" style="left:4.5px;top:7px" width="7" height="2" viewBox="0 0 7 2"><circle cx="1" cy="1" r="0.85" fill="#303133"/><circle cx="3.5" cy="1" r="0.85" fill="#303133"/><circle cx="6" cy="1" r="0.85" fill="#303133"/></svg></div><div class="pb" style="left:911.8px">340</div><div class="pb" style="left:931.8px;color:#555;font-size:8px">›</div><div class="abs" style="left:957.3px;top:444px;line-height:12px;color:#555">前往</div><div class="abs" style="left:976.1px;top:442.3px;width:27.6px;height:15.3px;border:1px solid #e4e7ed;border-radius:2px;background:#fff"></div><div class="abs" style="left:1008px;top:444px;line-height:12px;color:#555">页</div><div class="abs" style="left:1019px;top:42.5px;width:5px;height:472.5px;background:#eef0f3"></div><div class="abs" style="left:1020.2px;top:81.4px;width:3px;height:336.5px;border-radius:1.5px;background:#c6c8cc"></div><div class="abs" style="left:1021.5px;top:422px;width:3px;height:8px;background:#4f5a64"></div><div class="abs" style="left:1021.5px;top:430px;width:3px;height:13.5px;background:#2f9fd8"></div><div class="abs" style="left:1020.6px;top:437.5px;width:3px;height:5.5px;border-radius:2px;background:#2f9fd8"></div>
</body></html>
